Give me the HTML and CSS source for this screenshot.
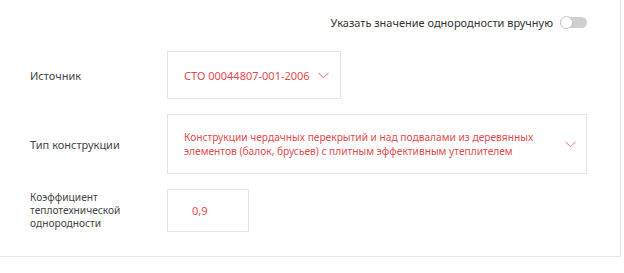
FILE: index.html
```html
<!DOCTYPE html>
<html lang="ru">
<head>
    <meta charset="UTF-8">
    <title>Однородность</title>
    <link rel="stylesheet" href="styles.css">
</head>
<body>
    <div class="card">
        <div class="head">
            <span class="head-text">Указать значение однородности вручную</span>
            <span class="toggle"><span class="knob"></span></span>
        </div>

        <div class="row">
            <div class="label">Источник</div>
            <div class="field field-source">
                <span class="value">СТО 00044807-001-2006</span>
                <svg class="chev" width="11" height="7" viewBox="0 0 11 7"><path d="M0.5 0.8 L5.5 5.8 L10.5 0.8" fill="none" stroke="#e2575a" stroke-width="1"/></svg>
            </div>
        </div>

        <div class="row">
            <div class="label">Тип конструкции</div>
            <div class="field field-type">
                <span class="value">Конструкции чердачных перекрытий и над подвалами из деревянных<br>элементов (балок, брусьев) с плитным эффективным утеплителем</span>
                <svg class="chev" width="11" height="7" viewBox="0 0 11 7"><path d="M0.5 0.8 L5.5 5.8 L10.5 0.8" fill="none" stroke="#e8777a" stroke-width="1"/></svg>
            </div>
        </div>

        <div class="row">
            <div class="label label-small">Коэффициент<br>теплотехнической<br>однородности</div>
            <div class="field field-coef">
                <span class="value">0,9</span>
            </div>
        </div>
    </div>
</body>
</html>
```

FILE: styles.css
```css
body {
    margin: 0;
    background: #fff;
    font-family: "Noto Sans", "Open Sans", sans-serif;
    font-size: 11px;
}
.card {
    border-right: 1px solid #e6e6e6;
    border-bottom: 1px solid #e6e6e6;
    padding: 0 0 0 30px;
    box-sizing: border-box;
    width: 621px;
    height: 257px;
}
.head {
    display: flex;
    justify-content: flex-end;
    align-items: center;
    height: 45px;
    padding-right: 33px;
    color: #333;
}
.head-text {
    margin-right: 7px;
}
.toggle {
    width: 27px;
    height: 11px;
    background: #cfcfcf;
    border-radius: 6px;
    position: relative;
}
.knob {
    position: absolute;
    left: 0;
    top: -1px;
    width: 11px;
    height: 11px;
    border-radius: 50%;
    background: #fff;
    border: 1px solid #c4c4c4;
}
.row {
    display: flex;
    align-items: center;
    margin-top: 6px;
    margin-bottom: 9px;
}
.row + .row {
    margin-top: 15px;
}
.label {
    width: 137px;
    color: #444;
}
.label-small {
    font-size: 10.2px;
    line-height: 13px;
}
.field {
    display: flex;
    align-items: center;
    border: 1px solid #e4e4e4;
    box-sizing: border-box;
    color: #e04b4f;
    padding-left: 16px;
}
.field-source {
    width: 174px;
    height: 48px;
    padding-right: 11px;
    justify-content: space-between;
}
.field-type {
    width: 420px;
    height: 60px;
    padding-right: 10px;
    justify-content: space-between;
    font-size: 10.2px;
    line-height: 14px;
}
.field-coef {
    width: 82px;
    height: 43px;
    padding-left: 24px;
}
```
